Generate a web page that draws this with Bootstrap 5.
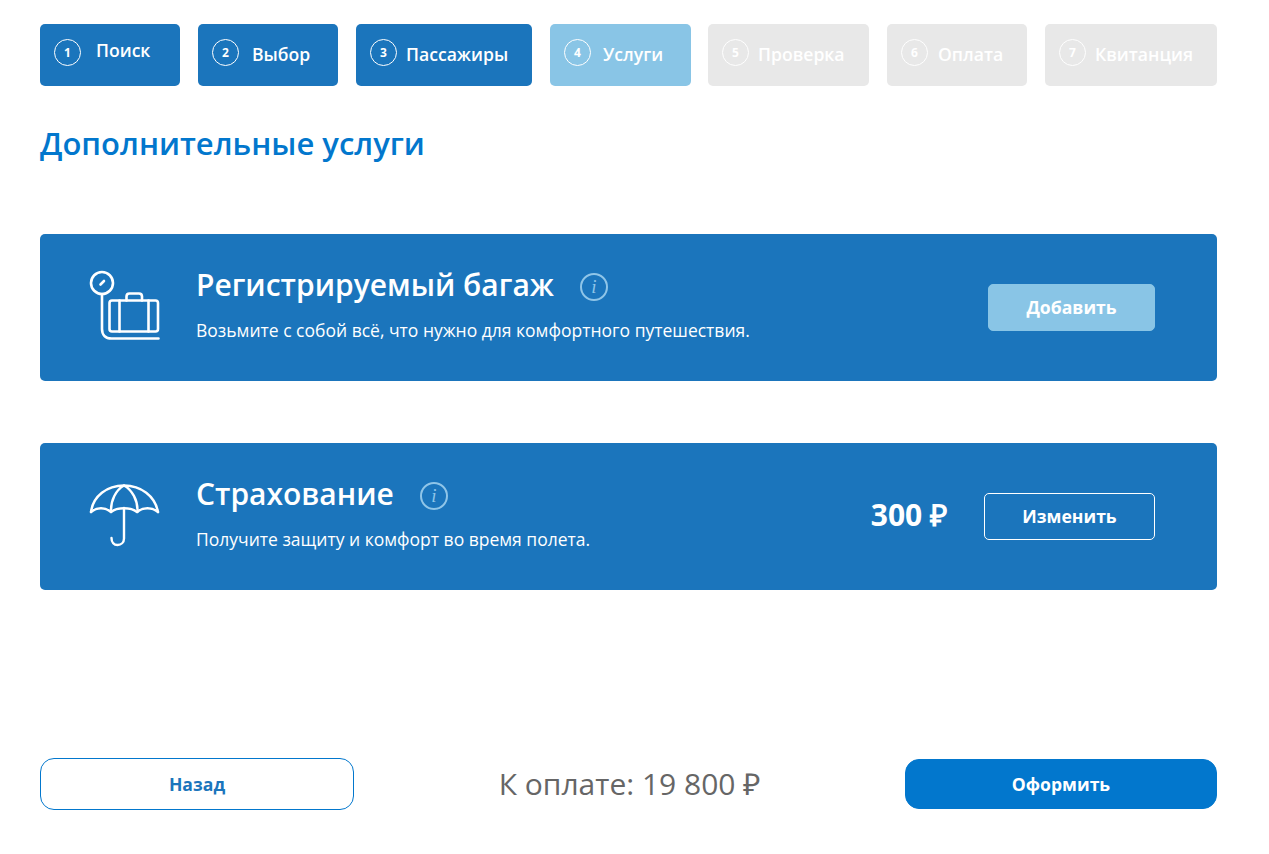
<!DOCTYPE html>
<html lang="ru">
<head>
    <meta charset="UTF-8">
    <title>Дополнительные услуги</title>
    <link href="https://cdn.jsdelivr.net/npm/bootstrap@5.3.3/dist/css/bootstrap.min.css" rel="stylesheet">
    <style>
        body { font-family: "Open Sans", "Liberation Sans", sans-serif; background: #fff; }
        .page-wrap { padding: 24px 52px 0 40px; }

        /* Шаги */
        .steps { gap: 18px; }
        .step-item { height: 62px; border-radius: 5px; padding: 15px 0 0 14px; background: #1b75bc; color: #fff; font-size: 17.6px; font-weight: 600; line-height: 24px; flex-shrink: 0; }
        .step-item.step-current { background: #89c5e6; }
        .step-item.step-off { background: #e8e8e8; }
        .step-num { width: 27px; height: 27px; border: 1px solid #fff; border-radius: 50%; font-size: 12px; font-weight: 700; line-height: 25px; text-align: center; flex-shrink: 0; }
        .step-name { margin-top: 3px; white-space: nowrap; }
        .w-search { width: 140px; }
        .w-search .step-name { margin: -1px 0 0 15px; }
        .w-choice { width: 140px; }
        .w-choice .step-name { margin-left: 13px; }
        .w-pass { width: 176px; }
        .w-pass .step-name { margin-left: 9px; }
        .w-serv { width: 141px; }
        .w-serv .step-name { margin-left: 12px; }
        .w-check { width: 161px; margin-left: -1px; }
        .w-check .step-name { margin-left: 9px; }
        .w-pay { width: 140px; }
        .w-pay .step-name { margin-left: 10px; }
        .w-receipt { width: 172px; }
        .w-receipt .step-name { margin-left: 9px; }

        .page-title { color: #0277cd; font-size: 31px; font-weight: 600; line-height: 40px; margin: 37px 0 71px; }

        /* Карточки услуг */
        .serv-box { height: 147px; border-radius: 5px; background: #1b75bc; color: #fff; padding: 0 62px 0 45px; margin-bottom: 62px; }
        .serv-icon { width: 80px; height: 80px; flex-shrink: 0; margin: -5px 31px 0 0; }
        .serv-icon svg { display: block; }
        .serv-text { margin-top: -7px; }
        .serv-name { font-size: 30px; font-weight: 600; line-height: 38px; }
        .serv-desc { font-size: 17.5px; line-height: 24px; margin-top: 14px; }
        .info-mark { width: 28px; height: 28px; border: 2px solid #8fc5e8; border-radius: 50%; color: #8fc5e8; font-family: "Liberation Serif", serif; font-style: italic; font-size: 19px; line-height: 24px; text-align: center; margin: 3px 0 0 26px; }
        .serv-btn { width: 167px; height: 47px; border-radius: 5px; font-size: 17.6px; font-weight: 700; line-height: 45px; padding: 0; color: #fff; text-align: center; }
        .serv-btn.btn-add { background: #89c5e6; border: 1px solid #89c5e6; }
        .serv-btn.btn-edit { width: 171px; background: transparent; border: 1px solid #fff; }
        .serv-price { font-size: 30px; font-weight: 700; margin-right: 37px; margin-top: -4px; }

        /* Низ страницы */
        .foot-row { margin-top: 168px; }
        .foot-btn { width: 314px; height: 52px; border-radius: 14px; font-size: 17.6px; font-weight: 700; }
        .foot-back { background: #fff; border: 1px solid #0277cd; color: #1b75bc; }
        .foot-send { width: 312px; height: 50px; background: #0277cd; border: 1px solid #0277cd; color: #fff; }
        .foot-total { color: #666; font-size: 30px; line-height: 52px; }
    </style>
</head>
<body>
    <div class="page-wrap">
        <!-- Шаги -->
        <div class="d-flex steps">
            <div class="step-item d-flex align-items-start w-search"><span class="step-num">1</span><span class="step-name">Поиск</span></div>
            <div class="step-item d-flex align-items-start w-choice"><span class="step-num">2</span><span class="step-name">Выбор</span></div>
            <div class="step-item d-flex align-items-start w-pass"><span class="step-num">3</span><span class="step-name">Пассажиры</span></div>
            <div class="step-item step-current d-flex align-items-start w-serv"><span class="step-num">4</span><span class="step-name">Услуги</span></div>
            <div class="step-item step-off d-flex align-items-start w-check"><span class="step-num">5</span><span class="step-name">Проверка</span></div>
            <div class="step-item step-off d-flex align-items-start w-pay"><span class="step-num">6</span><span class="step-name">Оплата</span></div>
            <div class="step-item step-off d-flex align-items-start w-receipt"><span class="step-num">7</span><span class="step-name">Квитанция</span></div>
        </div>

        <h1 class="page-title">Дополнительные услуги</h1>

        <!-- Багаж -->
        <div class="serv-box d-flex align-items-center">
            <div class="serv-icon">
                <svg width="80" height="80" viewBox="0 0 80 80" fill="none" stroke="#fff" stroke-width="2.6" stroke-linecap="round" stroke-linejoin="round">
                    <circle cx="17" cy="18" r="11"/>
                    <path d="M15.500 19.500l3.500-3.500"/>
                    <path d="M17 29v35c0 6 3.500 9.500 9.500 9.500h47"/>
                    <rect x="24.500" y="35.500" width="48.500" height="31" rx="2.500"/>
                    <path d="M34.500 35.500v31M63.500 35.500v31"/>
                    <path d="M41.500 35.500v-4c0-2 1-3 3-3h9.500c2 0 3 1 3 3v4"/>
                </svg>
            </div>
            <div class="serv-text">
                <div class="d-flex align-items-center">
                    <span class="serv-name">Регистрируемый багаж</span>
                    <span class="info-mark">i</span>
                </div>
                <div class="serv-desc">Возьмите с собой всё, что нужно для комфортного путешествия.</div>
            </div>
            <div class="ms-auto d-flex align-items-center">
                <button class="btn serv-btn btn-add" type="button">Добавить</button>
            </div>
        </div>

        <!-- Страхование -->
        <div class="serv-box d-flex align-items-center">
            <div class="serv-icon">
                <svg width="80" height="80" viewBox="0 0 80 80" fill="none" stroke="#fff" stroke-width="2.4" stroke-linecap="round" stroke-linejoin="round">
                    <path d="M6 38C8 22 22 11.500 39 11.500S70 22 73 38"/>
                    <path d="M6 38c6-5 14-5 20 0 6-5 20-5 26 0 6-5 15-5 21 0"/>
                    <path d="M39 11.500C31 16 25.500 26 26 38M39 11.500C47 16 53 26 52.500 38"/>
                    <path d="M39 34v30.500c0 4-3 6.500-6.500 6.500S26.500 68.500 26.500 64"/>
                </svg>
            </div>
            <div class="serv-text">
                <div class="d-flex align-items-center">
                    <span class="serv-name">Страхование</span>
                    <span class="info-mark">i</span>
                </div>
                <div class="serv-desc">Получите защиту и комфорт во время полета.</div>
            </div>
            <div class="ms-auto d-flex align-items-center">
                <span class="serv-price">300 ₽</span>
                <button class="btn serv-btn btn-edit" type="button">Изменить</button>
            </div>
        </div>

        <!-- Итог -->
        <div class="foot-row d-flex justify-content-between align-items-center">
            <button class="btn foot-btn foot-back" type="button">Назад</button>
            <div class="foot-total">К оплате: 19 800 ₽</div>
            <button class="btn foot-btn foot-send" type="button">Оформить</button>
        </div>
    </div>
    <script src="https://cdn.jsdelivr.net/npm/bootstrap@5.3.3/dist/js/bootstrap.bundle.min.js"></script>
</body>
</html>
